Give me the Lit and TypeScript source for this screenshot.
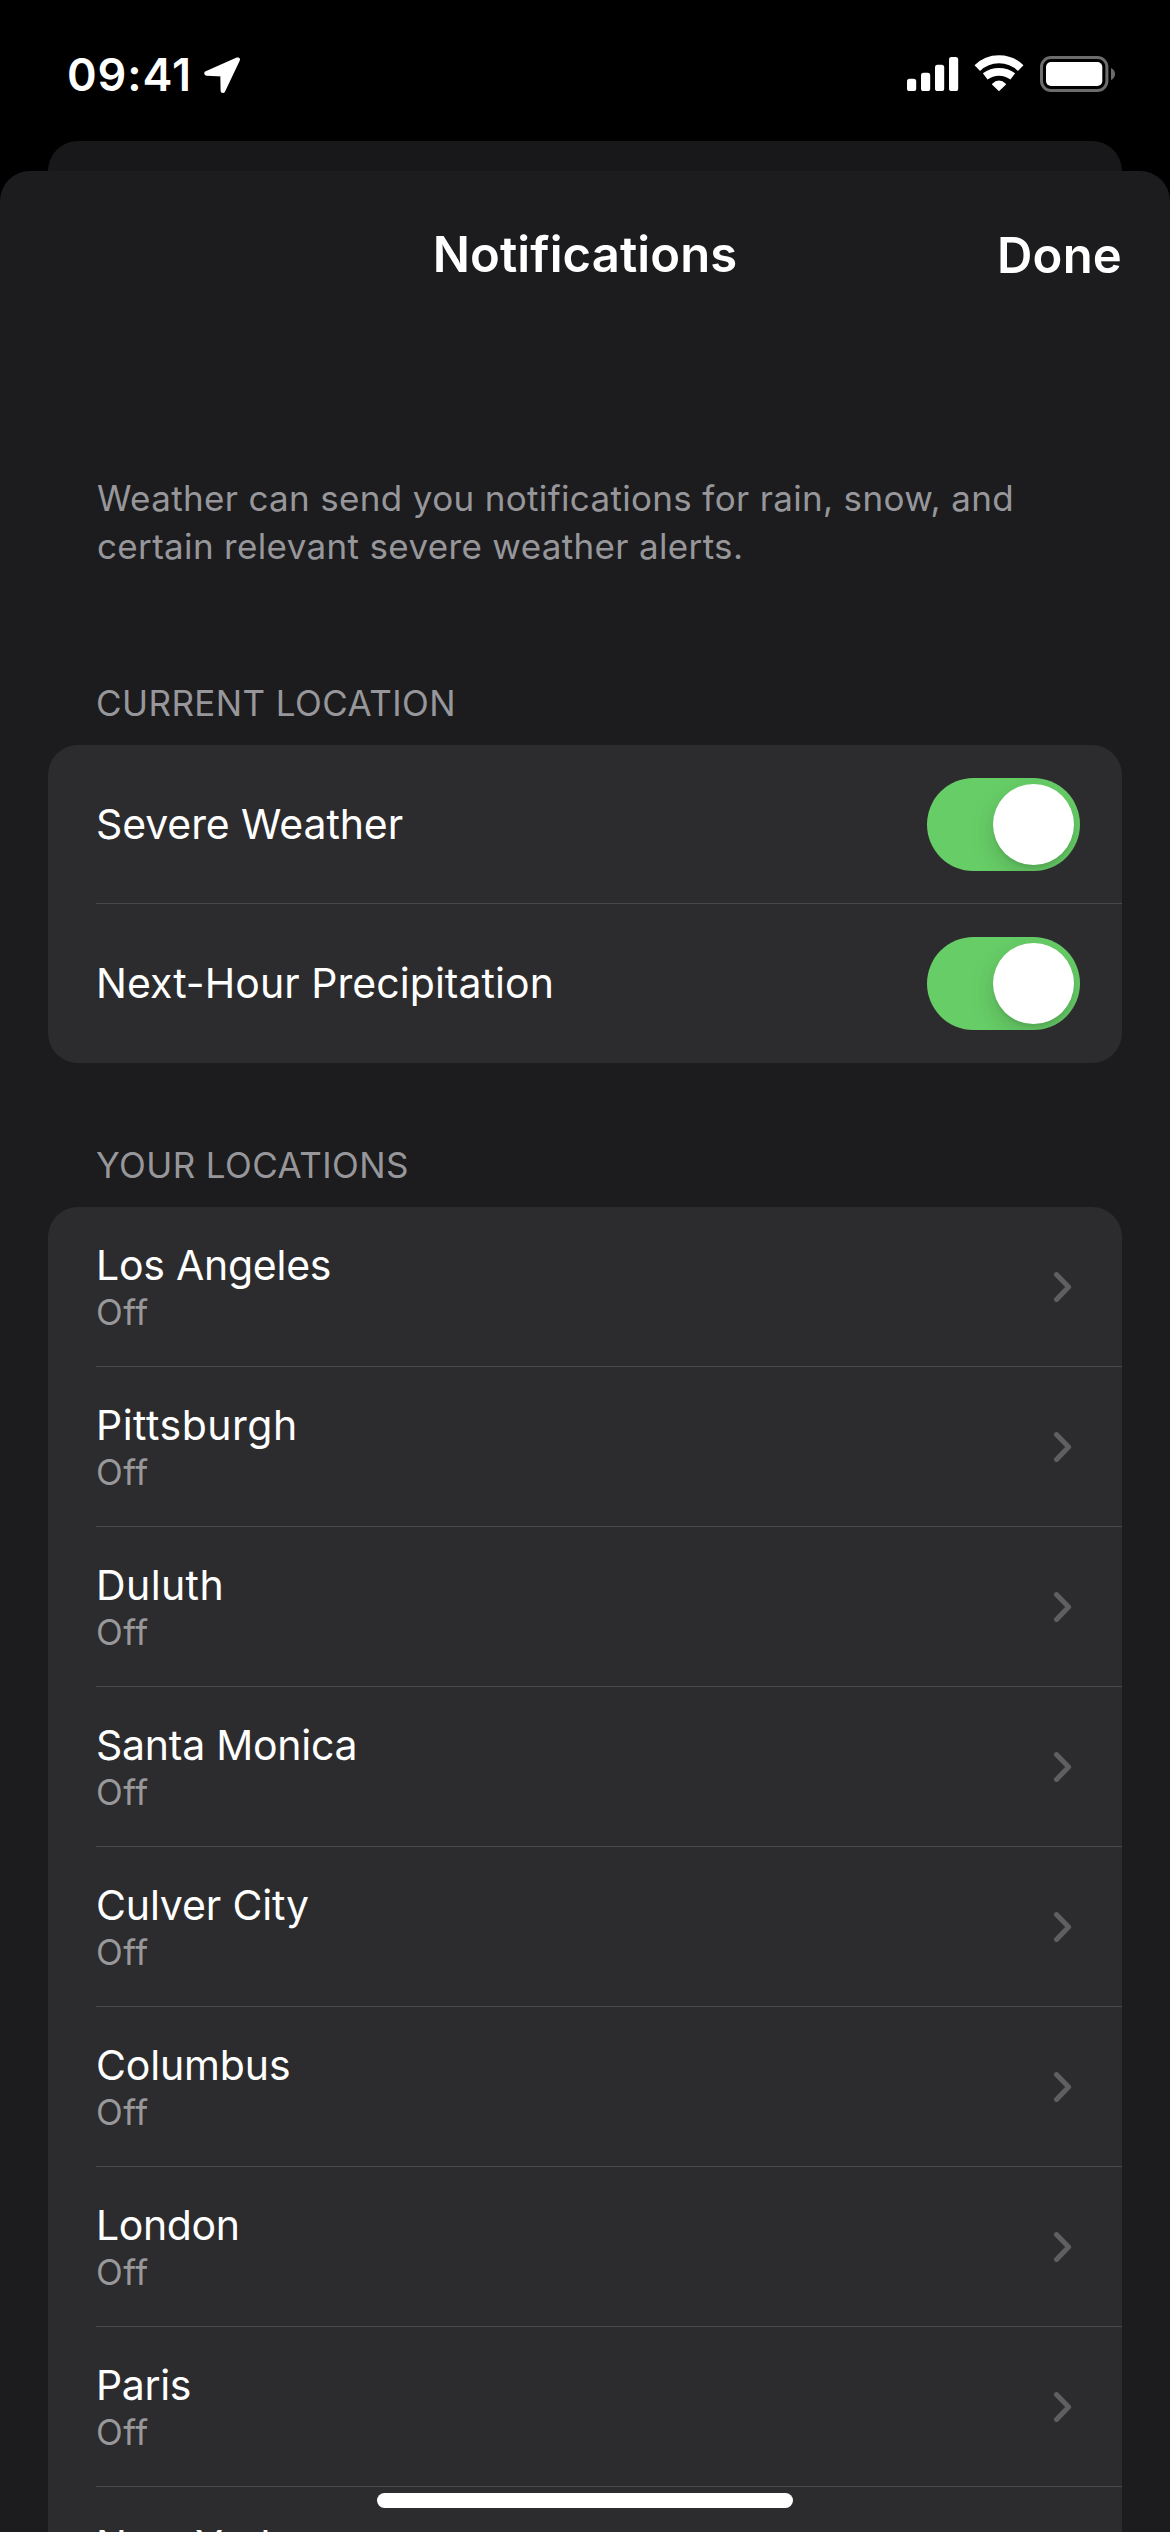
import { LitElement, html, css, svg } from "lit";
import { customElement, property } from "lit/decorators.js";
import { styleMap } from "lit/directives/style-map.js";

interface Entry {
  name: string;
  /** Letter spacing of the name, in pixels. */
  tracking: number;
  status?: string;
}

const ALERTS: Entry[] = [
  { name: "Severe Weather", tracking: -0.1 },
  { name: "Next-Hour Precipitation", tracking: 0.05 },
];

const PLACES: Entry[] = [
  { name: "Los Angeles", tracking: -0.25, status: "Off" },
  { name: "Pittsburgh", tracking: 0.5, status: "Off" },
  { name: "Duluth", tracking: 0.4, status: "Off" },
  { name: "Santa Monica", tracking: -0.25, status: "Off" },
  { name: "Culver City", tracking: -0.15, status: "Off" },
  { name: "Columbus", tracking: -0.15, status: "Off" },
  { name: "London", tracking: -0.4, status: "Off" },
  { name: "Paris", tracking: -0.35, status: "Off" },
  { name: "New York", tracking: 0, status: "Off" },
];

const SIGNAL = [
  { x: 0, h: 12.3 },
  { x: 14, h: 18.3 },
  { x: 28, h: 26.3 },
  { x: 42, h: 34 },
];

@customElement("status-bar")
export class StatusBar extends LitElement {
  static styles = css`
    :host {
      display: flex;
      justify-content: space-between;
      height: 141px;
      box-sizing: border-box;
      padding: 55px 54px 0 67px;
      color: #fff;
    }
    .left,
    .right {
      display: flex;
      align-items: flex-start;
    }
    .time {
      font-size: 45px;
      font-weight: 600;
      line-height: 40px;
      letter-spacing: 0.9px;
    }
    .arrow {
      margin: 2px 0 0 12px;
    }
    .wifi {
      margin-left: 15px;
    }
    .battery {
      margin-left: 16px;
    }
    svg {
      display: block;
    }
  `;

  render() {
    return html`
      <div class="left">
        <span class="time">09:41</span>
        <svg class="arrow" width="37" height="37" viewBox="0 0 37 37">
          <path
            d="M33.6 2.7 L2.6 16.4 L18.6 17.2 L18.9 33.8 Z"
            fill="#fff"
            stroke="#fff"
            stroke-width="4.6"
            stroke-linejoin="round"
          />
        </svg>
      </div>
      <div class="right">
        <svg width="52" height="38" viewBox="0 0 52 38">
          ${SIGNAL.map(
            (b) => svg`<rect x=${b.x} y=${36 - b.h} width="9.2" height=${b.h} rx="2.6" fill="#fff" />`
          )}
        </svg>
        <svg class="wifi" width="50" height="38" viewBox="0 0 50 38">
          <g fill="none" stroke="#fff">
            <path d="M3.3 13.1 A31.1 31.1 0 0 1 46.7 13.1" stroke-width="8" />
            <path d="M11.2 21.4 A23 23 0 0 1 38.8 21.4" stroke-width="7.8" />
          </g>
          <path
            d="M18.7 29.3 Q25 22.9 31.3 29.3 L25 35.3 Z"
            fill="#fff"
            stroke="#fff"
            stroke-width="1.4"
            stroke-linejoin="round"
          />
        </svg>
        <svg class="battery" width="76" height="38" viewBox="0 0 76 38">
          <rect x="1.5" y="2.5" width="65.4" height="33" rx="9.5" fill="none" stroke="#6c6c6c" stroke-width="3" />
          <rect x="6" y="7" width="56.3" height="24" rx="5" fill="#fff" />
          <path d="M71 13 Q75 15 75 19 Q75 23 71 25 Z" fill="#6c6c6c" />
        </svg>
      </div>
    `;
  }
}

@customElement("toggle-switch")
export class ToggleSwitch extends LitElement {
  @property({ type: Boolean, reflect: true }) on = false;

  static styles = css`
    :host {
      display: flex;
      align-items: center;
      width: 153px;
      height: 93px;
      box-sizing: border-box;
      padding: 6px;
      border-radius: 47px;
      overflow: hidden;
      background: #39393d;
    }
    :host([on]) {
      background: #67ce67;
      justify-content: flex-end;
    }
    .knob {
      width: 81px;
      height: 81px;
      border-radius: 50%;
      background: #fff;
      box-shadow: 0 9px 24px rgba(0, 0, 0, 0.17), 0 3px 3px rgba(0, 0, 0, 0.06);
    }
  `;

  render() {
    return html`<span class="knob"></span>`;
  }
}

@customElement("app-root")
export class AppRoot extends LitElement {
  static styles = css`
    :host {
      display: flex;
      flex-direction: column;
      position: relative;
      height: 2532px;
      overflow: hidden;
      background: #000;
      color: #fff;
      font-family: Inter, "Liberation Sans", sans-serif;
    }
    .behind {
      height: 30px;
      flex: none;
      margin: 0 48px;
      border-radius: 30px 30px 0 0;
      background: #18181a;
    }
    .sheet {
      flex: 1;
      min-height: 0;
      overflow: hidden;
      border-radius: 30px 30px 0 0;
      background: #1c1c1e;
      padding: 0 48px;
    }
    .nav {
      display: grid;
      grid-template-columns: 1fr auto 1fr;
      padding-top: 54px;
      height: 249.3px;
      align-items: start;
      font-size: 49px;
      font-weight: 600;
      line-height: 60px;
      letter-spacing: 0.1px;
    }
    .title {
      grid-column: 2;
    }
    .done {
      justify-self: end;
      padding-top: 1px;
      letter-spacing: 0.2px;
    }
    .intro {
      margin: 0 0 113px;
      padding-left: 49px;
      width: 940px;
      font-size: 35px;
      line-height: 48px;
      letter-spacing: 0.34px;
      color: #97979b;
    }
    .heading {
      margin: 0 0 21.7px;
      padding-left: 48px;
      font-size: 35px;
      font-weight: 400;
      line-height: 40px;
      letter-spacing: 0.42px;
      color: #97979b;
    }
    .card {
      border-radius: 30px;
      background: #2c2c2e;
      padding-left: 48px;
      overflow: hidden;
    }
    .alerts {
      margin-bottom: 82.3px;
    }
    .row {
      display: flex;
      align-items: center;
      justify-content: space-between;
      box-sizing: border-box;
      border-bottom: 1px solid #48484b;
      font-size: 41px;
    }
    .row:last-child {
      border-bottom: 0;
    }
    .alert {
      height: 159px;
      padding-right: 42px;
    }
    .alert:not(:last-child) {
      padding-top: 1px;
    }
    .place {
      height: 160px;
      padding-right: 50px;
    }
    .name {
      display: block;
      line-height: 48px;
    }
    .status {
      display: block;
      font-size: 35px;
      line-height: 46px;
      letter-spacing: 0.4px;
      color: #98989b;
    }
    .label {
      padding-top: 3px;
    }
    .chevron {
      margin-top: 2px;
    }
    .home {
      position: absolute;
      left: 377px;
      bottom: 24px;
      width: 416px;
      height: 15px;
      border-radius: 8px;
      background: #fff;
    }
  `;

  private renderName(entry: Entry) {
    return html`<span class="name" style=${styleMap({ letterSpacing: `${entry.tracking}px` })}
      >${entry.name}</span
    >`;
  }

  private renderAlert(alert: Entry) {
    return html`
      <div class="row alert">
        ${this.renderName(alert)}
        <toggle-switch on></toggle-switch>
      </div>
    `;
  }

  private renderPlace(place: Entry) {
    return html`
      <div class="row place">
        <div class="label">
          ${this.renderName(place)}
          <span class="status">${place.status}</span>
        </div>
        <svg class="chevron" width="20" height="32" viewBox="0 0 20 32">
          <path
            d="M4.5 3.6 L16.6 16 L4.5 28.4"
            fill="none"
            stroke="#5f5f62"
            stroke-width="5"
            stroke-linecap="round"
            stroke-linejoin="round"
          />
        </svg>
      </div>
    `;
  }

  render() {
    return html`
      <status-bar></status-bar>
      <div class="behind"></div>
      <main class="sheet">
        <header class="nav">
          <span class="title">Notifications</span>
          <span class="done">Done</span>
        </header>
        <p class="intro">
          Weather can send you notifications for rain, snow, and certain relevant severe weather alerts.
        </p>
        <h2 class="heading">CURRENT LOCATION</h2>
        <section class="card alerts">${ALERTS.map((a) => this.renderAlert(a))}</section>
        <h2 class="heading">YOUR LOCATIONS</h2>
        <section class="card">${PLACES.map((p) => this.renderPlace(p))}</section>
      </main>
      <div class="home"></div>
    `;
  }
}
